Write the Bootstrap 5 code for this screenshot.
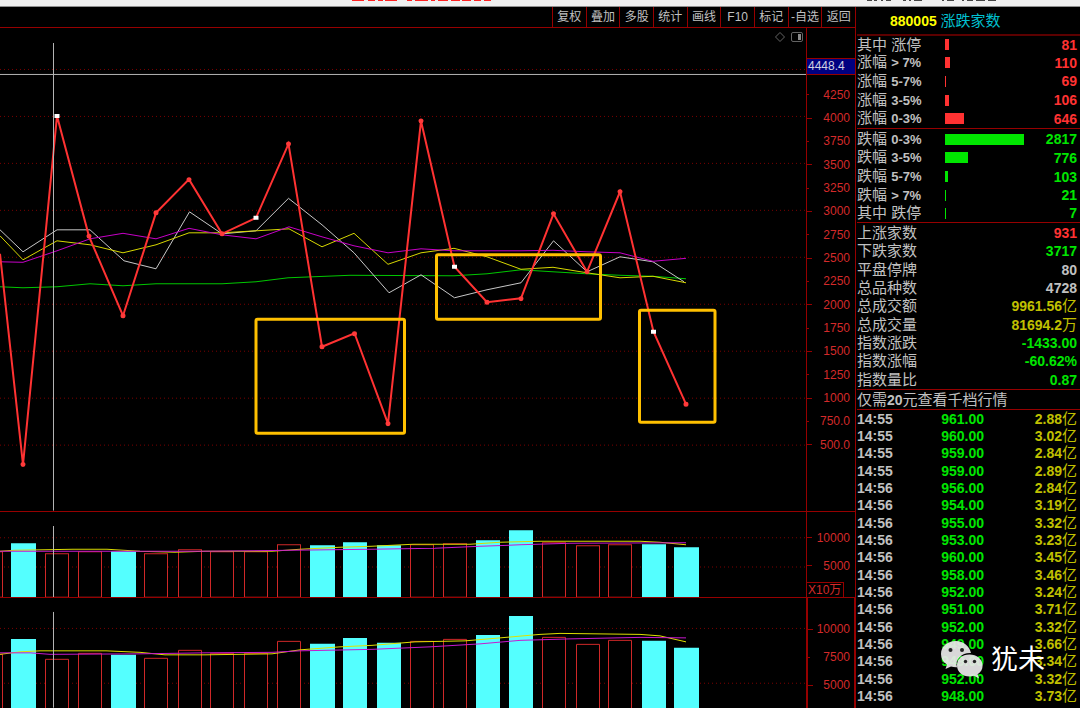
<!DOCTYPE html>
<html lang="zh-CN">
<head>
<meta charset="utf-8">
<meta name="viewport" content="width=device-width, initial-scale=1">
<title>880005 涨跌家数</title>
<link href="https://cdn.jsdelivr.net/npm/bootstrap@5.3.0/dist/css/bootstrap.min.css" rel="stylesheet">
<style>
:root{--line:#960000;--dim:#5c0000;--red:#ff3232;--green:#00e600;--gold:#c0c000;--ink:#c0c0c0}
body{background:#000;color:var(--ink);font-family:"Liberation Sans","Noto Sans CJK SC",sans-serif;font-size:12px;line-height:16px}
.strip{height:7px;background:#f0f0f0;border-bottom:1px solid #909090}
.toolbar{height:21px;border-bottom:1px solid var(--line)}
.tools{display:grid;grid-template-columns:repeat(9,1fr);width:303px}
.tools button{background:none;border:0;border-left:1px solid var(--line);color:var(--ink);padding:0;white-space:nowrap}
.panel{min-height:0}
.price{flex:484 1 0;border-bottom:1px solid var(--line)}
.vol{flex:86 1 0;border-bottom:1px solid var(--line)}
.vol2{flex:110 1 0}
.plot{min-width:0}
.plot svg{width:100%;height:100%;display:block}
.axis{width:49px;border-left:1px solid var(--line);color:#d42a2a}
.vol2 .axis{border-left-width:2px;border-right:1px solid var(--line)}
.axis li{display:flex;align-items:center;justify-content:space-between;padding-right:5px}
.axis li::before{content:"";width:5px;height:1px;background:var(--line)}
.axis li.minor::before{width:2px}
.vol2 .axis li{padding-right:4px}
.scale{margin:8px 0 54px}
.scale li{flex:1 1 0;min-height:0}
.steps{padding-top:12px}
.vol2 .steps{padding-top:17px}
.steps li{height:28px}
.cursor-tag{margin-top:30px;height:17px;padding-left:1px;background:#000080;color:#d0d0e0;border-top:1px solid var(--line);border-bottom:1px solid var(--line);line-height:15px}
.unit{width:37px;padding-left:1px;border:1px solid var(--line);border-left:0;border-bottom:0;line-height:14px}
.quote{width:225px;border-left:1px solid var(--line);padding-left:1px}
.quote h1{height:29px;padding-left:33px;font-size:14px;line-height:27px;color:#ff0;border-bottom:2px solid var(--dim)}
.quote h1 span{font-size:15px;font-weight:400;color:#00c0d0}
.quote table{font-size:14px;font-weight:700;line-height:16px}
.quote th,.quote td{padding:0;white-space:nowrap}
.quote th{width:88px;font-size:15px;font-weight:400}
.quote td{text-align:right;padding-right:3px}
.quote th b{font-size:13px}
.quote td i{font-style:normal;font-weight:400;font-size:15px}
.group{border-bottom:1px solid var(--line)}
.group + .group{padding-top:1px}
.five{height:92px}
.nine{height:165px}
.meter{height:11px}
.up{color:var(--red)}.down{color:var(--green)}.sum{color:var(--gold)}
.bg-up{background:var(--red)}.bg-down{background:var(--green)}
.promo{height:20px;font-size:15px;line-height:19px;color:var(--ink);border-bottom:1px solid var(--line)}
.promo b{font-size:14px}
.ticks{height:calc(100% - 3px)}
.quote .ticks td:nth-child(2){width:91px;padding-right:0;color:var(--green)}
.quote .ticks td:nth-child(3){color:var(--gold)}
.quote .ticks th{font-size:14px;font-weight:700;width:36px}
.signature{right:35px;bottom:28px;color:#fff;font-size:27px;line-height:40px}
</style>
</head>
<body>
<div class="vh-100 d-flex flex-column overflow-hidden">
  <div class="strip flex-shrink-0 d-flex justify-content-between">
    <svg width="500" height="2" aria-hidden="true"><path d="M352 0h12m4 0h7m3 0h5m2 0h12m10 0h5m3 0h13m3 0h4m3 0h10m3 0h9m2 0h9m3 0h7m3 0h7" stroke="#f22" stroke-width="2" fill="none"/></svg>
    <svg width="225" height="2" aria-hidden="true"><path d="M12 0h5m2 0h3m4 0h2m3 0h5m12 0h3m3 0h2m3 0h8m20 0h2m3 0h7m8 0h2m3 0h6m3 0h9m3 0h8" stroke="#444" stroke-width="2" fill="none"/></svg>
  </div>
  <div class="d-flex flex-fill panel">
    <main class="d-flex flex-column flex-fill plot">
      <nav class="toolbar flex-shrink-0 d-flex justify-content-end">
        <div class="tools">
          <button type="button">复权</button><button type="button">叠加</button><button type="button">多股</button><button type="button">统计</button><button type="button">画线</button><button type="button">F10</button><button type="button">标记</button><button type="button">-自选</button><button type="button">返回</button>
        </div>
      </nav>
      <section class="panel price d-flex">
        <div class="plot flex-fill">
          <svg viewBox="0 28 806 483" preserveAspectRatio="none" fill="none">
            <path d="M0 69.5H806M0 116.5H806M0 163.5H806M0 210.5H806M0 257.5H806M0 304.5H806M0 351.5H806M0 398.5H806M0 445.5H806" stroke="#7a0000" stroke-dasharray="1 3"/>
            <polyline stroke="#00c800" points="0,287 23,288 57,287 90,284 123,286 156,284 222,284 256,282 288,278 350,275.5 454,276 487,274 521,270 553,272 587,274 620,275.5 653,276.5 686,279"/>
            <polyline stroke="#c8c8c8" points="0,230 23,252 57,230 90,230 124,261 156,269 189.5,212 222,234 256,231 288.5,198.5 322,225 354,253 389,293 421,275 454.5,298 487,290 521,283 553.5,241 587,272 620,257 653,262 684,282"/>
            <polyline stroke="#d8d800" points="0,236 23,260 57,241 90,245 123,253 156,245 189,233 222,233 256,231 289,229 322,247 354,233.5 388,264.5 421,253 454,248.5 487,257 521,269.5 553,267.5 587,273 620,278 653,276.5 686,283"/>
            <polyline stroke="#c800c8" points="0,262 23,262.5 57,251 90,239 123,233.5 156,239 189,228.5 222,235 256,239 289,227 322,237 354,246 388,253 421,249 454,251 521,251 553,250.5 587,252 620,253 653,261.5 686,258.5"/>
            <polyline stroke="#ff3232" stroke-width="2" points="0,254 23,465 57,116 89,236.5 123,316 156,213 189,179.5 222,234 256,218 288.5,144 322,347 354.5,333.5 388,424 421,121 454.5,267 487,302.5 521,298.5 553.5,214 587,272 620,192 653.5,332 686,404.5"/>
            <path stroke="#ff3a3a" stroke-width="5" stroke-linecap="round" d="M23 465h0M89 236.5h0M123 316h0M156 213h0M189 180h0M222 234h0M288.5 144h0M322 347h0M354.5 334h0M388 424h0M421 121h0M487 302.5h0M521 299h0M553.5 214h0M587 272h0M620 192h0M686 404.5h0"/>
            <path fill="#fff" d="M54.5 114h5v4h-5zM253.5 216h5v4h-5zM452 265h5v4h-5zM651 330h5v4h-5z"/>
            <g stroke="#ffc000" stroke-width="3"><rect x="256" y="319.5" width="148.5" height="114" rx="1.5"/><rect x="436.5" y="255" width="164" height="64.5" rx="1.5"/><rect x="639.5" y="310.5" width="75.5" height="112" rx="1.5"/></g>
            <path stroke="#b4b4b4" d="M53.5 43V511M0 74.5H806"/>
            <g stroke="#646464"><path d="M780 32.5l4.5 4.5-4.5 4.5-4.5-4.5z"/><rect x="791.5" y="32.5" width="11" height="9" rx="1.5"/><path d="M799.5 34v6" stroke="#8a8a8a" stroke-width="3"/></g>
          </svg>
        </div>
        <div class="axis flex-shrink-0 d-flex flex-column">
          <div class="cursor-tag">4448.4</div>
          <ul class="scale list-unstyled flex-fill d-flex flex-column">
            <li class="minor">4250</li><li>4000</li><li class="minor">3750</li><li>3500</li><li class="minor">3250</li><li>3000</li><li class="minor">2750</li><li>2500</li><li class="minor">2250</li><li>2000</li><li class="minor">1750</li><li>1500</li><li class="minor">1250</li><li>1000</li><li class="minor">750.0</li><li>500.0</li>
          </ul>
        </div>
      </section>
      <section class="panel vol d-flex">
        <div class="plot flex-fill">
          <svg viewBox="0 512 806 85" preserveAspectRatio="none" fill="none">
            <path d="M0 537.5H806M0 566.5H806" stroke="#7a0000" stroke-dasharray="1 3"/>
            <path fill="#000" stroke="#d02828" d="M-20 551.5H2.5V596.5H-20zM45.5 553.5h23V596.5h-23zM78.5 551.5h23V596.5h-23zM144.5 553.5h23V596.5h-23zM178.5 549.5h23V596.5h-23zM210.5 551.5h23V596.5h-23zM244.5 551.5h23V596.5h-23zM277.5 544.5h23V596.5h-23zM410.5 544.5h23V596.5h-23zM443.5 543.5h23V596.5h-23zM542.5 542.5h23V596.5h-23zM576.5 545.5h23V596.5h-23zM608.5 544.5h23V596.5h-23z"/>
            <path fill="#54ffff" d="M11 543h25v54h-25zM111 551h25v46h-25zM310 545h25v52h-25zM343 542h24v55h-24zM377 545h24v52h-24zM476 540h24v57h-24zM509 530h24v67h-24zM642 544h24v53h-24zM674 547h25v50h-25z"/>
            <polyline stroke="#d8d800" points="0,551 15,550 73,549 107,549 140,551 175,552 205,551 272,551 300,549 340,547 372,546 413,544 470,544 500,542 540,541 640,541 660,542 686,544.5"/>
            <polyline stroke="#c818d0" points="0,551 200,551 290,550 370,549 435,548 480,546 520,544.5 570,543 686,542.5"/>
            <path stroke="#b4b4b4" d="M53.5 526V597"/>
          </svg>
        </div>
        <div class="axis flex-shrink-0 d-flex flex-column justify-content-between">
          <ul class="steps list-unstyled m-0"><li>10000</li><li>5000</li></ul>
          <div class="unit">X10万</div>
        </div>
      </section>
      <section class="panel vol2 d-flex">
        <div class="plot flex-fill">
          <svg viewBox="0 598 806 110" preserveAspectRatio="none" fill="none">
            <path d="M0 628.5H806M0 683.5H806" stroke="#7a0000" stroke-dasharray="1 3"/>
            <path fill="#000" stroke="#d02828" d="M-20 654.5H2.5V720H-20zM45.5 659.5h23V720h-23zM78.5 653.5h23V720h-23zM144.5 658.5h23V720h-23zM178.5 650.5h23V720h-23zM210.5 653.5h23V720h-23zM244.5 653.5h23V720h-23zM277.5 641.5h23V720h-23zM410.5 641.5h23V720h-23zM443.5 639.5h23V720h-23zM542.5 637.5h23V720h-23zM576.5 644.5h23V720h-23zM608.5 640.5h23V720h-23z"/>
            <path fill="#54ffff" d="M11 639h25v70h-25zM111 655h25v54h-25zM310 644h25v65h-25zM343 638h24v71h-24zM377 643h24v66h-24zM476 635h24v74h-24zM509 616h24v93h-24zM642 641h24v68h-24zM674 648h25v61h-25z"/>
            <polyline stroke="#e0e000" points="0,654.5 20,652 40,651 106,651 140,652.5 165,655 205,655 272,654 300,650 340,647 372,645.5 415,642 465,641 500,638 540,634.5 560,633.5 640,634.5 660,636 686,642"/>
            <polyline stroke="#c818d0" points="0,653 30,653 50,654.5 140,654 205,653 272,652.5 300,651 372,649.5 430,647 480,644 520,640.5 570,639 640,637.5 686,638"/>
            <path stroke="#b4b4b4" d="M53.5 612V708"/>
          </svg>
        </div>
        <div class="axis flex-shrink-0"><ul class="steps list-unstyled m-0"><li>10000</li><li class="minor">7500</li><li>5000</li></ul></div>
      </section>
    </main>
    <aside class="quote flex-shrink-0 d-flex flex-column position-relative">
      <h1 class="m-0 flex-shrink-0 fw-bold">880005 <span>涨跌家数</span></h1>
      <div class="group flex-shrink-0"><table class="w-100 five">
        <tr><th scope="row">其中 涨停</th><td><div class="meter bg-up" style="width:4px"></div></td><td class="up">81</td></tr>
        <tr><th scope="row">涨幅 <b>&gt; 7%</b></th><td><div class="meter bg-up" style="width:5px"></div></td><td class="up">110</td></tr>
        <tr><th scope="row">涨幅 <b>5-7%</b></th><td><div class="meter bg-up" style="width:1px"></div></td><td class="up">69</td></tr>
        <tr><th scope="row">涨幅 <b>3-5%</b></th><td><div class="meter bg-up" style="width:4px"></div></td><td class="up">106</td></tr>
        <tr><th scope="row">涨幅 <b>0-3%</b></th><td><div class="meter bg-up" style="width:19px"></div></td><td class="up">646</td></tr>
      </table></div>
      <div class="group flex-shrink-0"><table class="w-100 five">
        <tr><th scope="row">跌幅 <b>0-3%</b></th><td><div class="meter bg-down" style="width:79px"></div></td><td class="down">2817</td></tr>
        <tr><th scope="row">跌幅 <b>3-5%</b></th><td><div class="meter bg-down" style="width:23px"></div></td><td class="down">776</td></tr>
        <tr><th scope="row">跌幅 <b>5-7%</b></th><td><div class="meter bg-down" style="width:3px"></div></td><td class="down">103</td></tr>
        <tr><th scope="row">跌幅 <b>&gt; 7%</b></th><td><div class="meter bg-down" style="width:1px"></div></td><td class="down">21</td></tr>
        <tr><th scope="row">其中 跌停</th><td><div class="meter bg-down" style="width:1px"></div></td><td class="down">7</td></tr>
      </table></div>
      <div class="group flex-shrink-0"><table class="w-100 nine">
        <tr><th scope="row">上涨家数</th><td class="up">931</td></tr>
        <tr><th scope="row">下跌家数</th><td class="down">3717</td></tr>
        <tr><th scope="row">平盘停牌</th><td>80</td></tr>
        <tr><th scope="row">总品种数</th><td>4728</td></tr>
        <tr><th scope="row">总成交额</th><td class="sum">9961.56<i>亿</i></td></tr>
        <tr><th scope="row">总成交量</th><td class="sum">81694.2<i>万</i></td></tr>
        <tr><th scope="row">指数涨跌</th><td class="down">-1433.00</td></tr>
        <tr><th scope="row">指数涨幅</th><td class="down">-60.62%</td></tr>
        <tr><th scope="row">指数量比</th><td class="down">0.87</td></tr>
      </table></div>
      <a href="#" class="promo flex-shrink-0 d-block text-decoration-none">仅需<b>20</b>元查看千档行情</a>
      <div class="flex-fill panel"><table class="w-100 ticks">
        <tr><th scope="row">14:55</th><td>961.00</td><td>2.88<i>亿</i></td></tr>
        <tr><th scope="row">14:55</th><td>960.00</td><td>3.02<i>亿</i></td></tr>
        <tr><th scope="row">14:55</th><td>959.00</td><td>2.84<i>亿</i></td></tr>
        <tr><th scope="row">14:55</th><td>959.00</td><td>2.89<i>亿</i></td></tr>
        <tr><th scope="row">14:56</th><td>956.00</td><td>2.84<i>亿</i></td></tr>
        <tr><th scope="row">14:56</th><td>954.00</td><td>3.19<i>亿</i></td></tr>
        <tr><th scope="row">14:56</th><td>955.00</td><td>3.32<i>亿</i></td></tr>
        <tr><th scope="row">14:56</th><td>953.00</td><td>3.23<i>亿</i></td></tr>
        <tr><th scope="row">14:56</th><td>960.00</td><td>3.45<i>亿</i></td></tr>
        <tr><th scope="row">14:56</th><td>958.00</td><td>3.46<i>亿</i></td></tr>
        <tr><th scope="row">14:56</th><td>952.00</td><td>3.24<i>亿</i></td></tr>
        <tr><th scope="row">14:56</th><td>951.00</td><td>3.71<i>亿</i></td></tr>
        <tr><th scope="row">14:56</th><td>952.00</td><td>3.32<i>亿</i></td></tr>
        <tr><th scope="row">14:56</th><td>949.00</td><td>3.66<i>亿</i></td></tr>
        <tr><th scope="row">14:56</th><td>949.00</td><td>3.34<i>亿</i></td></tr>
        <tr><th scope="row">14:56</th><td>952.00</td><td>3.32<i>亿</i></td></tr>
        <tr><th scope="row">14:56</th><td>948.00</td><td>3.73<i>亿</i></td></tr>
      </table></div>
      <div class="signature position-absolute d-flex align-items-center gap-2">
        <svg width="42" height="38" viewBox="0 0 42 38"><path fill="#e8e8e8" fill-opacity=".93" d="M15 0C6.5 0 0 5.5 0 13c0 4.500 2 8 6 10.500L4.500 28l5.500-2.500c2 .6 4 .8 6 .7C13.500 18 21 11.500 30 12 28.500 5 22.500 0 15 0z"/><path fill="#e8e8e8" fill-opacity=".93" d="M28.500 13.500C21 13.500 16 18 16 24.500S21.500 35.500 28.500 35.500c1.500 0 3-.2 4.500-.7l5 2.700-1.400-4.200c3.300-2.300 5-5 5-8.800 0-6.500-6-11-13.100-11z"/><g fill="#222"><circle cx="9.500" cy="9" r="2"/><circle cx="21" cy="9" r="2"/><circle cx="24.500" cy="20.500" r="1.700"/><circle cx="33.500" cy="20.500" r="1.700"/></g></svg>
        <span>犹未</span>
      </div>
    </aside>
  </div>
</div>
<script src="https://cdn.jsdelivr.net/npm/bootstrap@5.3.0/dist/js/bootstrap.bundle.min.js"></script>
</body>
</html>
